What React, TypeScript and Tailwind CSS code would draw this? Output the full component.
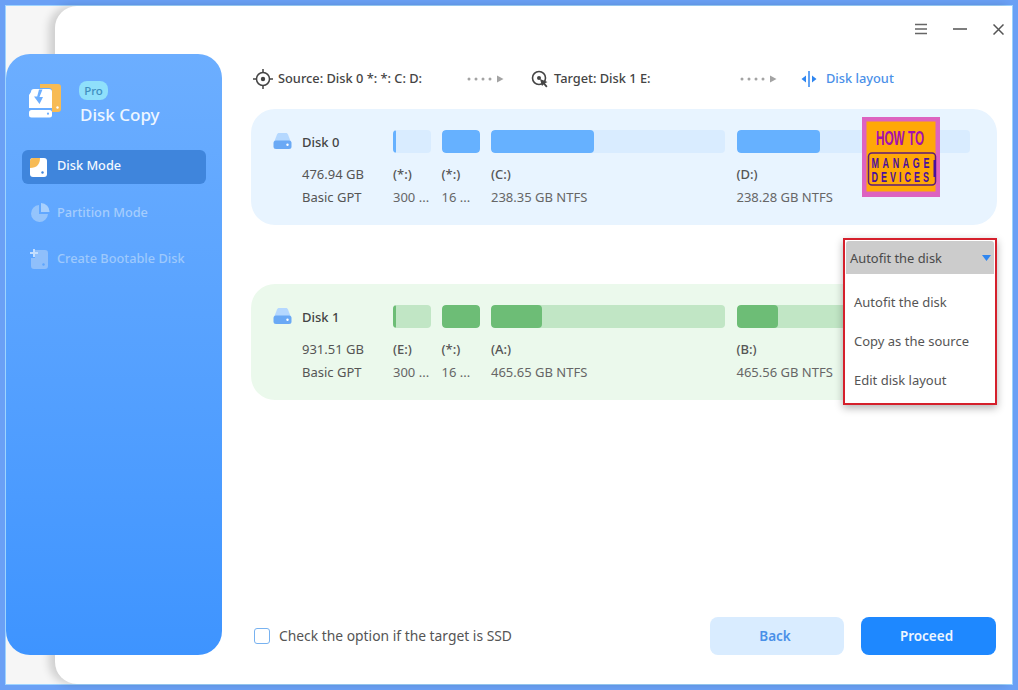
import React from "react";

type Part = { label: string; info: string; width: string; fill: string };

const disk0: Part[] = [
  { label: "(*:)", info: "300 ...", width: "w-[38px]", fill: "w-[3px]" },
  { label: "(*:)", info: "16 ...", width: "w-[38px] -ml-[1px]", fill: "w-full" },
  { label: "(C:)", info: "238.35 GB NTFS", width: "w-[234px]", fill: "w-[103px]" },
  { label: "(D:)", info: "238.28 GB NTFS", width: "w-[233px]", fill: "w-[83px]" },
];
const disk1: Part[] = [
  { label: "(E:)", info: "300 ...", width: "w-[38px]", fill: "w-[3px]" },
  { label: "(*:)", info: "16 ...", width: "w-[38px] -ml-[1px]", fill: "w-full" },
  { label: "(A:)", info: "465.65 GB NTFS", width: "w-[234px]", fill: "w-[51px]" },
  { label: "(B:)", info: "465.56 GB NTFS", width: "w-[233px]", fill: "w-[41px]" },
];

function DriveIcon() {
  return (
    <svg width="19" height="17" viewBox="0 0 19 17" className="shrink-0">
      <path d="M4 1.5C4.3.6 5 0 6 0h7c1 0 1.7.6 2 1.5L17.5 8h-16z" fill="#b5d8ff" />
      <rect x="0.5" y="7.5" width="18" height="8.5" rx="2.5" fill="#6aa9f5" />
      <circle cx="14.5" cy="11.8" r="1.2" fill="#fff" />
    </svg>
  );
}

function DiskCard({ name, size, parts, green }: { name: string; size: string; parts: Part[]; green?: boolean }) {
  return (
    <div className={`h-[116px] rounded-[24px] pl-[22px] pt-[21px] flex ${green ? "bg-[#ebf9ec]" : "bg-[#e8f4ff]"}`}>
      <div className="w-[120px] shrink-0">
        <div className="h-[23px] flex items-center gap-[10px]">
          <DriveIcon />
          <span className="text-[13px] font-medium text-[#444] mt-[2px]">{name}</span>
        </div>
        <div className="ml-[29px] mt-[10px] text-[13px] text-[#555] leading-[23px]">
          <div>{size}</div>
          <div>Basic GPT</div>
        </div>
      </div>
      <div className="flex gap-[11.5px]">
        {parts.map((p, i) => (
          <div key={i} className={`${p.width} shrink-0`}>
            <div className={`h-[23px] rounded-[4px] overflow-hidden ${green ? "bg-[#c1e6c5]" : "bg-[#d9ecff]"}`}>
              <div className={`h-full rounded-[4px] ${p.fill} ${green ? "bg-[#6dbd76]" : "bg-[#66b1ff]"}`} />
            </div>
            <div className="mt-[10px] text-[13px] leading-[23px] whitespace-nowrap">
              <div className="text-[#555] font-medium">{p.label}</div>
              <div className="text-[#666]">{p.info}</div>
            </div>
          </div>
        ))}
      </div>
    </div>
  );
}

function Dots() {
  return (
    <svg width="38" height="8" viewBox="0 0 38 8" className="shrink-0">
      {[2, 9, 16, 23].map((x) => (
        <circle key={x} cx={x} cy="4" r="1.5" fill="#a3a3a3" />
      ))}
      <path d="M30 .5 36.5 4 30 7.5z" fill="#a3a3a3" />
    </svg>
  );
}

function Logo() {
  const font = "'Liberation Sans', sans-serif";
  return (
    <svg width="78" height="80" viewBox="0 0 78 80" className="absolute right-[57px] top-[8px]">
      <rect width="78" height="80" fill="#dd63c0" />
      <rect x="4.500" y="4.500" width="69" height="70" fill="#ffa807" />
      <g transform="translate(14 28) scale(0.56 1)">
        <text x="0" y="0" fontFamily={font} fontWeight="700" fontSize="21" fill="#a30fb0">HOW TO</text>
      </g>
      <rect x="6.500" y="36" width="67" height="32" rx="3.500" fill="none" stroke="#5d1a78" strokeWidth="1.500" />
      <rect x="71.500" y="43" width="2.500" height="17" fill="#4a0f9e" />
      <g transform="translate(9.500 50.500) scale(0.6 1)" fontFamily={font} fontWeight="700" fontSize="15" fill="#4a0f9e">
        <text x="0" y="0" letterSpacing="6">MANAGE</text>
      </g>
      <g transform="translate(9.500 65) scale(0.6 1)" fontFamily={font} fontWeight="700" fontSize="15" fill="#4a0f9e">
        <text x="0" y="0" letterSpacing="5">DEVICES</text>
      </g>
    </svg>
  );
}

export default function App() {
  return (
    <div className="w-[1018px] h-[690px] p-[5px] bg-[#6aa0f5] overflow-hidden" style={{ fontFamily: "'Noto Sans', sans-serif" }}>
      <div className="h-full flex bg-[#f6f6f6] border border-[#9ed4ff]">
        {/* Sidebar */}
        <aside className="w-[216px] shrink-0 mt-[48px] mb-[29px] z-10 rounded-[24px] bg-gradient-to-b from-[#6caeff] to-[#3e94ff] px-[16px]">
          <div className="flex items-start pt-[27px] pl-[6px] h-[96px]">
            <svg width="36" height="36" viewBox="0 0 36 36" className="mt-[2px] shrink-0">
              <path d="M12 1h18a3 3 0 0 1 3 3v22a3 3 0 0 1-3 3h-6V8a3 3 0 0 0-3-3h-9z" fill="#f7bb55" />
              <circle cx="29.500" cy="24.500" r="1.200" fill="#fff" />
              <path d="M3 9a3 3 0 0 1 3-3h15a3 3 0 0 1 3 3v16H1V12z" fill="#fff" />
              <rect x="1" y="27" width="23" height="7.500" rx="2.500" fill="#fff" />
              <circle cx="20" cy="30.700" r="1.100" fill="#6caeff" />
              <path d="M14.500 6.500 11.500 14H15l-3.500 7L6 13.500h3.200L11 6.500z" fill="#6caeff" />
            </svg>
            <div className="ml-[15px]">
              <div className="w-[29px] h-[19px] rounded-[8px] bg-[#8fe0fb] text-[#3f8fc0] text-[11.5px] flex items-center justify-center font-medium">Pro</div>
              <div className="text-[17px] leading-[24px] mt-[3px] ml-[1px] text-[#eef6ff] font-medium whitespace-nowrap">Disk Copy</div>
            </div>
          </div>
          <nav className="text-[12.75px] font-medium">
            <div className="h-[34px] rounded-[6px] bg-[#3f85dc] flex items-center pl-[8px] pb-[2px] gap-[10px] text-[#f2f8ff]">
              <svg width="17" height="19" viewBox="0 0 17 19" className="shrink-0 mt-[2px]">
                <rect width="17" height="19" rx="3" fill="#fff" />
                <path d="M3 0h7c0 6-3 10-10 10V3a3 3 0 0 1 3-3z" fill="#f7bb55" />
                <circle cx="12.500" cy="14.500" r="1.200" fill="#3f85dc" />
              </svg>
              <span>Disk Mode</span>
            </div>
            <div className="h-[34px] mt-[12px] flex items-center pl-[8px] gap-[7px] text-[#a5cdfd]">
              <svg width="20" height="20" viewBox="0 0 20 20" className="shrink-0">
                <path d="M9 2a8.500 8.500 0 1 0 9 9H9z" fill="#94c4fc" />
                <path d="M11 0a8.500 8.500 0 0 1 8.500 9H11z" fill="#a8d0fd" />
              </svg>
              <span>Partition Mode</span>
            </div>
            <div className="h-[34px] mt-[12px] flex items-center pl-[7px] gap-[9px] text-[#9ec9fc]">
              <svg width="19" height="20" viewBox="0 0 19 20" className="shrink-0">
                <path d="M6 1h10a3 3 0 0 1 3 3v13a3 3 0 0 1-3 3H5a3 3 0 0 1-3-3V9h4z" fill="#8fbffb" />
                <path d="M4 0h2v3h3v2H6v3H4V5H1V3h3z" fill="#c3defe" />
                <circle cx="14.500" cy="15.500" r="1.200" fill="#5ea5fd" />
              </svg>
              <span>Create Bootable Disk</span>
            </div>
          </nav>
        </aside>

        {/* Main */}
        <main className="flex-1 -ml-[167px] pl-[196px] pr-[15px] bg-white rounded-l-[22px] shadow-[-6px_0_9px_rgba(0,0,0,0.16)] flex flex-col pb-[29px]">
          <div className="h-[47px] -mr-[8px] flex items-center justify-end pb-[1px] text-[#555]">
            <svg width="12" height="12" viewBox="0 0 12 12" className="mr-[26px]">
              <path d="M0 1.500h12M0 6h12M0 10.500h12" stroke="#666" strokeWidth="1.700" />
            </svg>
            <svg width="14" height="2" viewBox="0 0 14 2" className="mr-[26px]">
              <path d="M0 1h14" stroke="#666" strokeWidth="1.700" />
            </svg>
            <svg width="11" height="11" viewBox="0 0 11 11" className="mr-[1px]">
              <path d="M.5.5l10 10M10.500.5l-10 10" stroke="#555" strokeWidth="1.500" />
            </svg>
          </div>
          <div className="h-[56px] pb-[4px] flex items-center text-[12.8px] text-[#444] font-medium whitespace-nowrap pl-[2px]">
            <svg width="20" height="20" viewBox="0 0 20 20" className="shrink-0">
              <circle cx="10" cy="10" r="6.500" fill="none" stroke="#444" strokeWidth="1.500" />
              <circle cx="10" cy="10" r="2.200" fill="#444" />
              <path d="M10 0v3.500M10 16.500V20M0 10h3.500M16.500 10H20" stroke="#444" strokeWidth="1.500" />
            </svg>
            <span className="ml-[5px] w-[189px]">Source: Disk 0 *: *: C: D:</span>
            <Dots />
            <svg width="18" height="18" viewBox="0 0 18 18" className="shrink-0 ml-[26px]">
              <circle cx="8" cy="8" r="6.500" fill="none" stroke="#444" strokeWidth="1.600" />
              <circle cx="8" cy="8" r="2" fill="#444" />
              <path d="M9 9l7.500 3-2.500 1.200 2.500 3-1.300 1.300-2.600-3L11 16z" fill="#444" />
            </svg>
            <span className="ml-[5px] w-[186px]">Target: Disk 1 E:</span>
            <Dots />
            <svg width="18" height="18" viewBox="0 0 18 18" className="shrink-0 ml-[22px]">
              <path d="M9 1v16" stroke="#2f86f0" strokeWidth="1.500" />
              <path d="M6 5.500v7L1.500 9zM12 5.500v7L16.500 9z" fill="#2f86f0" />
            </svg>
            <span className="ml-[8px] text-[#4a90e8]">Disk layout</span>
          </div>

          <div className="relative">
            <DiskCard name="Disk 0" size="476.94 GB" parts={disk0} />
            <Logo />
          </div>
          <div className="relative h-[59px]">
            <div className="absolute right-0 top-[13px] w-[154px] h-[167px] border-2 border-[#d5202c] bg-white shadow-[0_3px_8px_rgba(0,0,0,0.3)] z-10 text-[13px] text-[#555] p-[1px] pb-0">
              <div className="h-[33px] bg-[#cccccc] rounded-t-[3px] flex items-center justify-between pl-[4px] pr-[3px] pt-[2px] text-[#4a4a4a]">
                <span className="text-[12.9px]">Autofit the disk</span>
                <svg width="9" height="6" viewBox="0 0 9 6" className="-mt-[2px]"><path d="M0 0h9L4.500 6z" fill="#2f86f0" /></svg>
              </div>
              <div className="pl-[8px] pt-[9px] leading-[39px]">
                <div>Autofit the disk</div>
                <div>Copy as the source</div>
                <div>Edit disk layout</div>
              </div>
            </div>
          </div>
          <DiskCard name="Disk 1" size="931.51 GB" parts={disk1} green />

          <div className="mt-auto flex items-center h-[38px]">
            <span className="w-[16px] h-[16px] ml-[3px] rounded-[3px] border-[1.500px] border-[#78b2f0] bg-white" />
            <span className="ml-[9px] text-[13.85px] text-[#555]">Check the option if the target is SSD</span>
            <button className="ml-auto w-[134px] h-[38px] pr-[4px] rounded-[8px] bg-[#d9ecff] text-[#4a90e8] text-[13.5px] font-semibold">Back</button>
            <button className="ml-[17px] mr-[1px] w-[135px] h-[38px] pr-[4px] rounded-[8px] bg-[#1e88ff] text-[#eef6ff] text-[13.5px] font-semibold">Proceed</button>
          </div>
        </main>
      </div>
    </div>
  );
}
